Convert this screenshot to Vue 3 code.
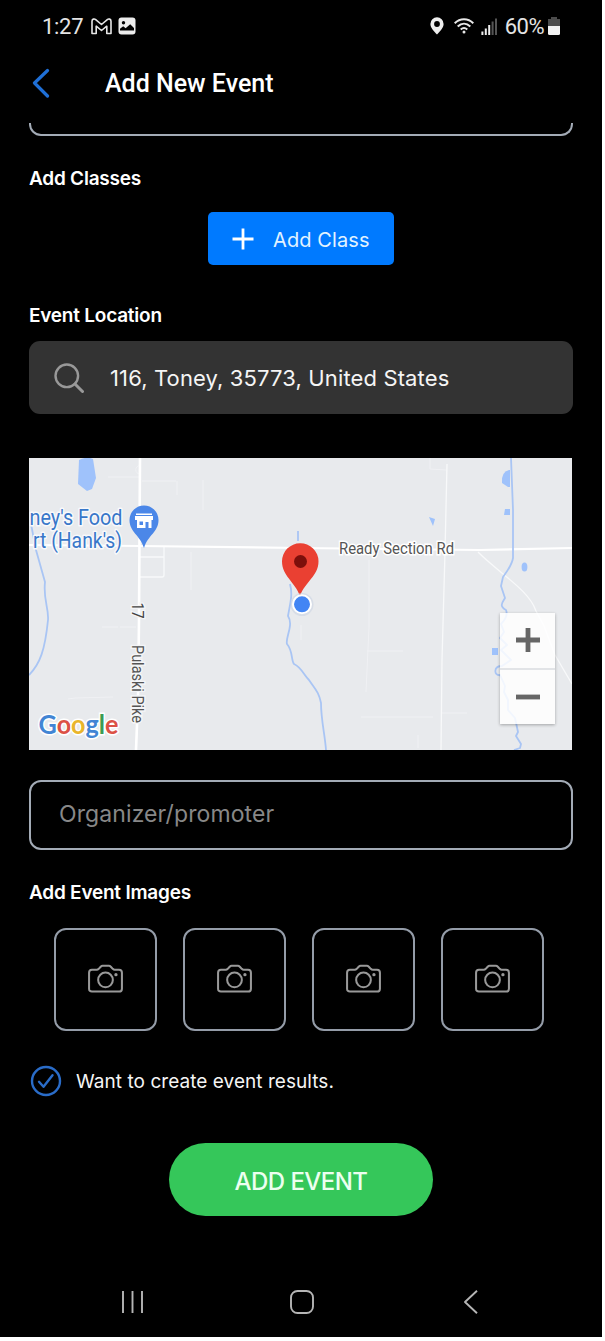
<script setup>
import {ref} from 'vue';

const location = ref('116, Toney, 35773, United States');
const organizer = ref('');
const wantResults = ref(true);
const imageSlots = 4;

const toggleResults = () => {
  wantResults.value = !wantResults.value;
};
</script>

<template>
  <div class="screen">
    <div class="status-bar">
      <div class="status-left">
        <span class="clock">1:27</span>
        <svg class="mail" width="21" height="17" viewBox="0 0 21 17" fill="none" stroke="#e6e6e6" stroke-width="1.600" stroke-linejoin="round">
          <path d="M1 3.2C1 1 3.300 .4 4.700 1.600L10.500 6.500 16.300 1.600C17.700 .4 20 1 20 3.200V15.500H15.800V8.200L10.500 12.500 5.200 8.200V15.500H1Z" />
        </svg>
        <svg class="photo" width="18" height="18" viewBox="0 0 18 18">
          <rect x="0.500" y="0.500" width="17" height="17" rx="3" fill="#ececec" />
          <circle cx="5.500" cy="5.700" r="1.700" fill="#000" />
          <path d="M2 13.500V11.800L5.200 9.300 7.600 11.300 12.200 7.300 16 11V13.500Z" fill="#000" />
        </svg>
      </div>
      <div class="status-right">
        <svg width="14" height="18" viewBox="0 0 14 18">
          <path fill="#eee" fill-rule="evenodd" d="M7 .3A6.600 6.600 0 0 0 .4 6.900C.4 11 4.500 14.500 7 17.500 9.500 14.500 13.600 11 13.600 6.900A6.600 6.600 0 0 0 7 .3ZM7 4.100A2.900 2.900 0 1 1 7 9.900 2.900 2.900 0 0 1 7 4.100Z" />
        </svg>
        <svg class="wifi" width="20" height="16" viewBox="0 0 20 16" fill="none" stroke="#e8e8e8" stroke-width="2">
          <path d="M.7 5.300C6-.1 14-.1 19.300 5.300M3.700 8.500C7.500 4.900 12.500 4.900 16.300 8.500M6.700 11.500C8.800 9.700 11.200 9.700 13.300 11.500" />
          <circle cx="10" cy="14" r="1.500" fill="#e8e8e8" stroke="none" />
        </svg>
        <svg class="signal" width="17" height="17" viewBox="0 0 17 17">
          <path d="M1.400 13.500V17M4.800 10.500V17M8.200 7V17" stroke="#eee" stroke-width="2" />
          <path d="M11.600 3.500V17M15 .5V17" stroke="#555" stroke-width="2" />
        </svg>
        <span class="percent">60%</span>
        <svg width="12" height="18" viewBox="0 0 12 18">
          <path d="M3 0H9V2H12V9H0V2H3Z" fill="#4c4c4c" />
          <path d="M0 9H12V16.500Q12 18 10.500 18H1.500Q0 18 0 16.500Z" fill="#f2f2f2" />
        </svg>
      </div>
    </div>

    <div class="header">
      <svg width="18" height="30" viewBox="0 0 18 30" fill="none" stroke="#1f6fd6" stroke-width="3.200" stroke-linecap="round" stroke-linejoin="round">
        <path d="M15.500 2.500 2.500 15 15.500 28" />
      </svg>
      <h1>Add New Event</h1>
    </div>

    <div class="form">
      <div class="field-end"></div>

      <h2 class="classes-title">Add Classes</h2>
      <button class="add-class">
        <svg width="22" height="22" viewBox="0 0 22 22" stroke="#fff" stroke-width="2.800">
          <path d="M11 .5V21.500M.5 11H21.500" />
        </svg>
        <span>Add Class</span>
      </button>

      <h2 class="location-title">Event Location</h2>
      <div class="search">
        <svg width="30" height="30" viewBox="0 0 30 30" fill="none" stroke="#999" stroke-width="2.400" stroke-linecap="round">
          <circle cx="12.800" cy="12.800" r="11.300" />
          <path d="M21 21 28.500 28.500" stroke-width="3" />
        </svg>
        <span>{{ location }}</span>
      </div>

      <div class="map">
        <svg width="543" height="292" viewBox="29 458 543 292">
          <rect x="29" y="458" width="543" height="292" fill="#e8eaed" />
          <!-- small roads -->
          <g fill="none" stroke="#f0f1f4" stroke-width="1">
            <path d="M140 465.500A4 4 0 0 0 140 474M108 477H139M142 481H176M177 481V495M203 480V510M102 627H118M120 627H136M68 699 75 698 113 697M191 552V590M301 625V640M369 560V627L366 692M367 651H403M361 717H433M441 713H467M430 458V469L446 470M418 748V735" />
          </g>
          <g fill="none" stroke="#f8f9fa" stroke-width="1.300">
            <path d="M140 557H164M164 547V575Q164 577 162 577H139M447 464 445 552 442 660 441 750" />
            <path d="M478 552C500 574 529 590 536 611L544 626 555 655 572 684" />
          </g>
          <!-- main roads -->
          <path d="M29 545 140 546 300 548 480 550 572 548" fill="none" stroke="#fff" stroke-width="2.200" />
          <path d="M140 458 139 620 138 700 136 750" fill="none" stroke="#fff" stroke-width="2.600" />
          <!-- water -->
          <g fill="none" stroke="#a9c5f4" stroke-width="1.800" stroke-linejoin="round">
            <path d="M31 524 36 550 45 582C43 600 49 608 48 620 45 650 40 664 29 675" />
            <path d="M298 531V541M290 584C293 595 290 604 288 616 294 625 285 638 287 644 293 651 291 660 294 664 301 667 304 675 309 680 315 689 319 692 321 703 321 720 325 735 326 750" />
            <path d="M511 458 513 510V558Q512 565 503 577L501 586 505 598C502 603 499 606 506 610 508 615 505 620 501 624L504 632 500 638 507 645 501 650 511 660 502 666C493 666 494 676 500 675L505 686 504 692 508 700 508 710 515 718 518 732 516 736 521 744 520 748 514 750" />
          </g>
          <g fill="#9fc2fb">
            <path d="M79 460Q87 456 93 459L96 478 92 489 87 491 78 484Z" />
            <path d="M509 470Q501 472 502 483L508 487H510V470Z" />
            <path d="M505 509H510V515H504Z M429 517 435 519 433 526Z M492 648H498V655H492Z" />
            <ellipse cx="524.500" cy="567" rx="2.900" ry="4.500" />
          </g>
          <!-- labels -->
          <g stroke="#f8f9fb" stroke-width="3" stroke-linejoin="round" paint-order="stroke" fill="#3877c9" font-size="21.500">
            <text x="29.500" y="524.500" textLength="93" lengthAdjust="spacingAndGlyphs">ney's Food</text>
            <text x="33" y="548" textLength="89" lengthAdjust="spacingAndGlyphs">rt (Hank's)</text>
          </g>
          <text x="339" y="554" textLength="115" lengthAdjust="spacingAndGlyphs" stroke="#fff" stroke-width="3" paint-order="stroke" fill="#555" font-size="16">Ready Section Rd</text>
          <g stroke="#f4f5f7" stroke-width="3" paint-order="stroke">
            <text transform="translate(131.500 602.500) rotate(90)" fill="#444" font-size="16.500" textLength="16" lengthAdjust="spacingAndGlyphs">17</text>
            <text transform="translate(131.500 645) rotate(90)" fill="#555" font-size="16" textLength="78" lengthAdjust="spacingAndGlyphs">Pulaski Pike</text>
          </g>
          <text class="brand" x="38.500" y="734" font-size="26.500" textLength="80" lengthAdjust="spacingAndGlyphs" stroke="#fff" stroke-width="3" paint-order="stroke"><tspan fill="#4285d4">G</tspan><tspan fill="#dc5146">o</tspan><tspan fill="#e9b52c">o</tspan><tspan fill="#4285d4">g</tspan><tspan fill="#3b9b54">l</tspan><tspan fill="#dc5146">e</tspan></text>
          <!-- store pin -->
          <path d="M144 505.500A14.500 14.500 0 0 0 129.500 520C129.500 532 140 535 144 548 148 535 158.500 532 158.500 520A14.500 14.500 0 0 0 144 505.500Z" fill="#4b87e8" />
          <path fill="#fff" fill-rule="evenodd" d="M136 513.500H152V515H136ZM135 516H153V520H151.500V528H148.500V522H145.500V528H137V520H135ZM139.500 521.500V525H143V521.500Z" />
          <!-- selected point -->
          <path d="M300 543.300A18 18 0 0 0 282 561.300C282 576 295 582 300 596 305 582 318.500 576 318.500 561.300A18 18 0 0 0 300 543.300Z" fill="#ea4032" />
          <circle cx="300.500" cy="561.500" r="6.500" fill="#7d0f0b" />
          <circle cx="302" cy="604.500" r="11.500" fill="#cbd4e2" opacity=".6" />
          <circle cx="302" cy="604.300" r="9" fill="#4285f4" stroke="#fff" stroke-width="2" />
        </svg>
        <div class="zoom">
          <button>
            <svg width="24" height="24" viewBox="0 0 24 24" stroke="#666" stroke-width="4.800"><path d="M12 0V24M0 12H24" /></svg>
          </button>
          <button>
            <svg width="24" height="24" viewBox="0 0 24 24" stroke="#666" stroke-width="4.800"><path d="M0 12H24" /></svg>
          </button>
        </div>
      </div>

      <input v-model="organizer" class="organizer" placeholder="Organizer/promoter">

      <h2 class="images-title">Add Event Images</h2>
      <div class="images">
        <div v-for="i in imageSlots" :key="i" class="image-slot">
          <svg width="35" height="29" viewBox="0 0 36 30" fill="none" stroke="#999" stroke-width="2.100" stroke-linejoin="round">
            <path d="M4 6H9Q10 6 11 5L13 2.800Q14 1.800 15 1.800H21.500Q22.500 1.800 23.500 2.800L25.500 5Q26.500 6 27.500 6H32Q35 6 35 9V25.500Q35 28.500 32 28.500H4Q1 28.500 1 25.500V9Q1 6 4 6Z" />
            <circle cx="18" cy="16.500" r="7.600" />
            <circle cx="28.800" cy="11" r="1.700" fill="#999" stroke="none" />
          </svg>
        </div>
      </div>

      <div class="results" @click="toggleResults">
        <svg width="32" height="32" viewBox="0 0 32 32" fill="none" stroke="#2a6cc8" stroke-width="2.400" stroke-linecap="round" stroke-linejoin="round">
          <circle cx="16" cy="16" r="14" />
          <path v-if="wantResults" d="M9 16.800 13.500 21.800 22.500 10.300" />
        </svg>
        <span>Want to create event results.</span>
      </div>

      <button class="submit">ADD EVENT</button>
    </div>

    <div class="nav-bar">
      <svg width="24" height="24" viewBox="0 0 24 24" stroke="#b5b5b5" stroke-width="1.900">
        <path d="M2 1V23M11.500 1V23M21 1V23" />
      </svg>
      <svg width="24" height="24" viewBox="0 0 24 24" fill="none" stroke="#b5b5b5" stroke-width="1.900">
        <rect x="1" y="1" width="22" height="22" rx="6.500" />
      </svg>
      <svg width="24" height="24" viewBox="0 0 24 24" fill="none" stroke="#b5b5b5" stroke-width="1.900" stroke-linejoin="round">
        <path d="M18 .8 6 12 18 23.200" />
      </svg>
    </div>
  </div>
</template>

<style>
body {
  background: #fff;
}
</style>

<style scoped>
.screen {
  width: 602px;
  height: 1337px;
  background: #000;
  color: #f5f5f5;
  font-family: Inter, sans-serif;
  display: flex;
  flex-direction: column;
  overflow: hidden;
}

svg {
  display: block;
  flex-shrink: 0;
}

button {
  border: 0;
  padding: 0;
  font-family: inherit;
  cursor: pointer;
}

.status-bar {
  height: 52px;
  padding: 0 42px;
  display: flex;
  justify-content: space-between;
  align-items: center;
  font: 22px Roboto, sans-serif;
  color: #e4e4e4;
}

.status-left,
.status-right {
  display: flex;
  align-items: center;
}

.clock {
  letter-spacing: -.300px;
}

.mail {
  margin-left: 8px;
}

.photo {
  margin-left: 6px;
}

.wifi {
  margin-left: 10px;
}

.signal {
  margin-left: 7px;
}

.percent {
  margin: 0 4px 0 7px;
  letter-spacing: -.500px;
}

.header {
  height: 71px;
  padding: 0 32px 9px;
  box-sizing: border-box;
  display: flex;
  align-items: center;
  gap: 55px;
}

h1 {
  margin: 0;
  font: 500 25px Roboto, sans-serif;
  color: #fff;
}

.form {
  padding: 0 29px;
  display: flex;
  flex-direction: column;
}

.field-end {
  height: 13px;
  box-sizing: border-box;
  border: solid #a3abb6;
  border-width: 0 2px 2px;
  border-radius: 0 0 12px 12px;
}

h2 {
  margin: 0;
  font-size: 19px;
  line-height: 24px;
  font-weight: 600;
  letter-spacing: -.230px;
  color: #fff;
}

.classes-title {
  margin-top: 31px;
}

.add-class {
  width: 186px;
  height: 53px;
  margin: 21px auto 0 179px;
  border-radius: 5px;
  background: #007aff;
  color: #e2f3ff;
  font-size: 20px;
  letter-spacing: .100px;
  display: flex;
  align-items: center;
  padding-left: 24px;
  gap: 19px;
}

.add-class span {
  padding-top: 2px;
}

.location-title {
  margin-top: 39px;
}

.search {
  height: 73px;
  margin-top: 13px;
  width: 544px;
  border-radius: 11px;
  background: #333;
  display: flex;
  align-items: center;
  padding-left: 25px;
  box-sizing: border-box;
  gap: 26px;
  font-size: 22px;
  letter-spacing: .130px;
}

.map {
  position: relative;
  height: 292px;
  margin-top: 44px;
  font-family: Roboto, sans-serif;
}

.brand {
  font-family: Lato, sans-serif;
  font-weight: 700;
}

.zoom {
  position: absolute;
  right: 18px;
  bottom: 26px;
  width: 55px;
  height: 111px;
  display: flex;
  flex-direction: column;
  background: rgba(255, 255, 255, .84);
  box-shadow: 0 1px 3px rgba(0, 0, 0, .3);
}

.zoom button {
  flex: 1;
  display: flex;
  align-items: center;
  justify-content: center;
  background: none;
}

.zoom button + button {
  border-top: 2px solid #e2e4e7;
}

.organizer {
  width: 544px;
  height: 70px;
  margin-top: 30px;
  padding: 0 28px 3px;
  box-sizing: border-box;
  border: 2px solid #a3abb6;
  border-radius: 12px;
  background: none;
  color: #fff;
  font: 23px Inter, sans-serif;
  letter-spacing: .100px;
}

.organizer::placeholder {
  color: #888;
}

.images-title {
  margin-top: 31px;
}

.images {
  display: flex;
  gap: 26px;
  margin: 23px 0 0 25px;
}

.image-slot {
  width: 103px;
  height: 103px;
  box-sizing: border-box;
  padding: 0 1px 3px 0;
  border: 2px solid #949ca8;
  border-radius: 12px;
  display: flex;
  align-items: center;
  justify-content: center;
}

.results {
  display: flex;
  align-items: center;
  gap: 14px;
  margin: 34px 0 0 1px;
  font-size: 19px;
  letter-spacing: .050px;
}

.results span {
  padding-top: 1px;
}

.submit {
  width: 264px;
  height: 73px;
  margin: 46px 0 0 140px;
  padding-top: 3px;
  border-radius: 37px;
  background: #35c75a;
  color: #ecfff0;
  font-size: 24px;
  font-weight: 500;
  letter-spacing: -.550px;
}

.nav-bar {
  margin-top: auto;
  padding: 0 119px 23px 121px;
  display: flex;
  justify-content: space-between;
}
</style>
